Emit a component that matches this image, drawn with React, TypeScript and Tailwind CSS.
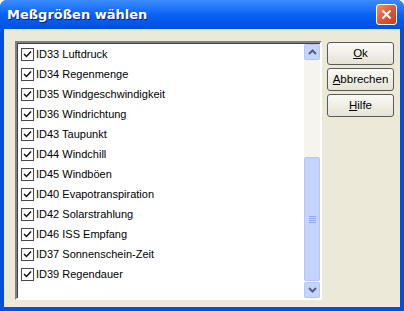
import React from 'react';

const items = [
    'ID33 Luftdruck',
    'ID34 Regenmenge',
    'ID35 Windgeschwindigkeit',
    'ID36 Windrichtung',
    'ID43 Taupunkt',
    'ID44 Windchill',
    'ID45 Windböen',
    'ID40 Evapotranspiration',
    'ID42 Solarstrahlung',
    'ID46 ISS Empfang',
    'ID37 Sonnenschein-Zeit',
    'ID39 Regendauer',
];

const CheckBox: React.FC = () => (
    <div className="w-[13px] h-[13px] border border-[#4a4a4a] bg-white flex items-center justify-center shrink-0">
        <svg width="11" height="11" viewBox="0 0 11 11">
            <path d="M2 5 L4.5 7.5 L9 2.5" stroke="#111" strokeWidth="1.5" fill="none" />
        </svg>
    </div>
);

const Chevron: React.FC<{ up?: boolean }> = ({ up }) => (
    <svg width="9" height="6" viewBox="0 0 9 6">
        <path d={up ? 'M1 5 L4.5 1.5 L8 5' : 'M1 1 L4.5 4.5 L8 1'} stroke="#4d6185" strokeWidth="2" fill="none" />
    </svg>
);

const Button: React.FC<{ first: string; rest: string }> = ({ first, rest }) => (
    <div className="w-[67px] h-[23px] rounded-[3px] border border-[#5a5a5a] bg-gradient-to-b from-[#fbfaf6] to-[#e6e3d6] flex items-center justify-center text-[11.5px] text-black">
        <span className="underline">{first}</span>
        {rest}
    </div>
);

const App: React.FC = () => {
    return (
        <div className="w-[404px] h-[311px] bg-[#0050e0] rounded-t-[7px] flex flex-col overflow-hidden" style={{ fontFamily: '"Liberation Sans", Arial, sans-serif' }}>
            {/* Title bar */}
            <div className="h-[29px] shrink-0 flex items-center justify-between pl-[7px] pr-[7px] bg-gradient-to-b from-[#3a8cff] via-[#0a62f5] to-[#0050e0]">
                <span className="text-white font-bold text-[13px] [text-shadow:1px_1px_0_#0a1e80]" style={{ fontFamily: '"DejaVu Sans", sans-serif' }}>
                    Meßgrößen wählen
                </span>
                <div className="w-[21px] h-[21px] rounded-[3px] border border-white bg-gradient-to-br from-[#f0906c] via-[#dc5a36] to-[#c13e1e] flex items-center justify-center">
                    <svg width="11" height="11" viewBox="0 0 11 11">
                        <path d="M1.5 1.5 L9.5 9.5 M9.5 1.5 L1.5 9.5" stroke="white" strokeWidth="2" />
                    </svg>
                </div>
            </div>

            {/* Client area */}
            <div className="flex-1 mx-[4px] mb-[4px] bg-[#ece9d8] flex pl-[11px] pt-[12px] pb-[7px] gap-[5px]">
                {/* List box */}
                <div className="w-[307px] h-[259px] border-2 border-t-[#808080] border-l-[#808080] border-b-white border-r-white flex">
                    <div className="flex-1 bg-white border-t border-l border-[#404040] flex flex-col">
                        {items.map((t) => (
                            <div key={t} className="h-[20px] flex items-center pl-[3px] gap-[2px] text-[11px] text-black shrink-0">
                                <CheckBox />
                                <span>{t}</span>
                            </div>
                        ))}
                    </div>
                    {/* Scrollbar */}
                    <div className="w-[16px] bg-[#f5f4ef] flex flex-col border-t border-[#404040]">
                        <div className="h-[16px] rounded-[2px] border border-[#b4c8f6] bg-[#c4d4fb] flex items-center justify-center">
                            <Chevron up />
                        </div>
                        <div className="flex-1 flex flex-col justify-end pb-[1px]">
                            <div className="h-[124px] rounded-[2px] border border-[#b4c8f6] bg-[#c4d4fb] flex items-center justify-center">
                                <div className="flex flex-col gap-[1px]">
                                    <div className="w-[7px] h-[1px] bg-[#8ea9ee]" />
                                    <div className="w-[7px] h-[1px] bg-[#8ea9ee]" />
                                    <div className="w-[7px] h-[1px] bg-[#8ea9ee]" />
                                    <div className="w-[7px] h-[1px] bg-[#8ea9ee]" />
                                </div>
                            </div>
                        </div>
                        <div className="h-[16px] rounded-[2px] border border-[#b4c8f6] bg-[#c4d4fb] flex items-center justify-center">
                            <Chevron />
                        </div>
                    </div>
                </div>

                {/* Buttons */}
                <div className="flex flex-col gap-[3px] pt-[1px]">
                    <Button first="O" rest="k" />
                    <Button first="A" rest="bbrechen" />
                    <Button first="H" rest="ilfe" />
                </div>
            </div>
        </div>
    );
};

export default App;
